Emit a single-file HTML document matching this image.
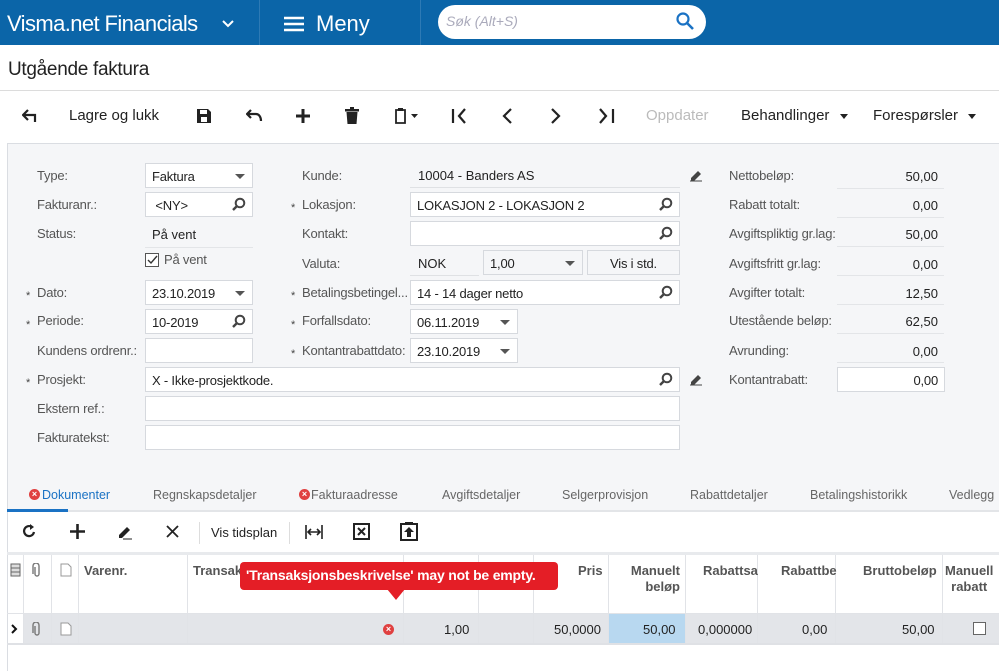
<!DOCTYPE html>
<html><head><meta charset="utf-8"><style>
*{margin:0;padding:0;box-sizing:border-box}
body{width:999px;height:671px;overflow:hidden;background:#fff;font-family:"Liberation Sans",Arial,sans-serif;position:relative;color:#222}
.a{position:absolute;white-space:nowrap}
.lbl{font-size:13px;color:#555;letter-spacing:-0.2px}
.inp{position:absolute;background:#fff;border:1px solid #d6d9de;height:25px;font-size:13px;padding:5px 6px;color:#222;letter-spacing:-0.2px}
.st{position:absolute;font-size:11px;color:#444}
.dd{position:absolute;right:7px;top:10px;border-left:5px solid transparent;border-right:5px solid transparent;border-top:5px solid #555}
.mg{position:absolute;right:6px;top:4px;width:14px;height:14px}
.val{position:absolute;font-size:13px;text-align:right;width:100px;color:#222}
.tb{font-size:15px;color:#222}
.gh{font-size:13px;font-weight:bold;color:#555}
.vl{position:absolute;top:555px;width:1px;height:88px;background:#e1e3e7}
</style></head><body>
<!-- header -->
<div class="a" style="left:0;top:0;width:999px;height:45px;background:#0b65a8"></div>
<div class="a" style="left:259px;top:0;width:1px;height:45px;background:#2d7ab5"></div>
<div class="a" style="left:420px;top:0;width:1px;height:45px;background:#2d7ab5"></div>
<div class="a" style="left:7px;top:11px;color:#fff;font-size:22px;letter-spacing:-0.6px">Visma.net Financials</div>
<svg class="a" style="left:222px;top:20px" width="12" height="8"><path d="M1 1l5 5 5-5" stroke="#fff" stroke-width="2" fill="none"/></svg>
<svg class="a" style="left:284px;top:16px" width="20" height="16"><path d="M0 2h20M0 8h20M0 14h20" stroke="#fff" stroke-width="2.5"/></svg>
<div class="a" style="left:316px;top:11px;color:#fff;font-size:22px">Meny</div>
<div class="a" style="left:438px;top:5px;width:268px;height:34px;background:#fff;border-radius:17px"></div>
<div class="a" style="left:446px;top:13px;color:#aab;font-size:14px;font-style:italic">Søk (Alt+S)</div>
<svg class="a" style="left:676px;top:12px" width="18" height="18"><circle cx="7" cy="7" r="5.5" stroke="#1a72c4" stroke-width="2.2" fill="none"/><path d="M11 11l6 6" stroke="#1a72c4" stroke-width="2.6"/></svg>
<!-- title -->
<div class="a" style="left:8px;top:59px;font-size:19px;color:#222;letter-spacing:-0.3px">Utgående faktura</div>
<div class="a" style="left:0;top:90px;width:999px;height:1px;background:#dcdcdc"></div>
<!-- toolbar -->
<svg class="a" style="left:22px;top:109px" width="16" height="14"><path d="M6 1L1 6l5 5M1 6h12v7" stroke="#222" stroke-width="2.2" fill="none"/></svg>
<div class="a tb" style="left:69px;top:107px">Lagre og lukk</div>
<svg class="a" style="left:196px;top:108px" width="16" height="16"><path d="M1 1h11l3 3v11H1z" fill="#222"/><rect x="4" y="2" width="7" height="4" fill="#fff"/><rect x="5" y="9" width="6" height="5" fill="#fff"/></svg>
<svg class="a" style="left:246px;top:109px" width="17" height="14"><path d="M5 1L1 5l4 4M1 5h9c3 0 5 3 5 7" stroke="#222" stroke-width="2.2" fill="none"/></svg>
<svg class="a" style="left:295px;top:108px" width="16" height="16"><path d="M8 1v14M1 8h14" stroke="#222" stroke-width="3"/></svg>
<svg class="a" style="left:345px;top:107px" width="14" height="17"><rect x="0" y="2" width="14" height="2.5" fill="#222"/><rect x="5" y="0" width="4" height="2" fill="#222"/><path d="M1.5 5h11l-1 12h-9z" fill="#222"/></svg>
<svg class="a" style="left:393px;top:107px" width="32" height="18"><path d="M3 3h9v13H3z" stroke="#222" stroke-width="1.8" fill="none"/><rect x="5" y="1" width="5" height="3" fill="#222"/><path d="M18 7h7l-3.5 4z" fill="#222"/></svg>
<svg class="a" style="left:451px;top:108px" width="18" height="16"><path d="M2 1v14M14 1L8 8l6 7" stroke="#222" stroke-width="2.2" fill="none"/></svg>
<svg class="a" style="left:501px;top:108px" width="12" height="16"><path d="M10 1L3 8l7 7" stroke="#222" stroke-width="2.2" fill="none"/></svg>
<svg class="a" style="left:550px;top:108px" width="12" height="16"><path d="M2 1l7 7-7 7" stroke="#222" stroke-width="2.2" fill="none"/></svg>
<svg class="a" style="left:598px;top:108px" width="18" height="16"><path d="M2 1l6 7-6 7M15 1v14" stroke="#222" stroke-width="2.2" fill="none"/></svg>
<div class="a tb" style="left:646px;top:107px;color:#bbb">Oppdater</div>
<div class="a tb" style="left:741px;top:107px">Behandlinger</div>
<div class="a" style="left:840px;top:114px;border-left:4px solid transparent;border-right:4px solid transparent;border-top:5px solid #222"></div>
<div class="a tb" style="left:873px;top:107px">Forespørsler</div>
<div class="a" style="left:968px;top:114px;border-left:4px solid transparent;border-right:4px solid transparent;border-top:5px solid #222"></div>
<!-- form area -->
<div class="a" style="left:7px;top:143px;width:992px;height:369px;background:#f5f6f8;border-left:1px solid #dadde2;border-top:1px solid #dadde2"></div>
<!-- left labels -->
<div class="a lbl" style="left:37px;top:168px">Type:</div>
<div class="a lbl" style="left:37px;top:197px">Fakturanr.:</div>
<div class="a lbl" style="left:37px;top:226px">Status:</div>
<div class="st" style="left:26px;top:290px">*</div><div class="a lbl" style="left:37px;top:285px">Dato:</div>
<div class="st" style="left:26px;top:319px">*</div><div class="a lbl" style="left:37px;top:313px">Periode:</div>
<div class="a lbl" style="left:37px;top:343px">Kundens ordrenr.:</div>
<div class="st" style="left:26px;top:377px">*</div><div class="a lbl" style="left:37px;top:372px">Prosjekt:</div>
<div class="a lbl" style="left:37px;top:401px">Ekstern ref.:</div>
<div class="a lbl" style="left:37px;top:430px">Fakturatekst:</div>
<div class="inp" style="left:145px;top:163px;width:108px">Faktura<span class="dd"></span></div>
<div class="inp" style="left:145px;top:192px;width:108px">&nbsp;&lt;NY&gt;<svg class="mg" viewBox="0 0 14 14"><circle cx="8" cy="6" r="4.3" stroke="#444" stroke-width="2" fill="none"/><path d="M5 9l-4 4" stroke="#444" stroke-width="2.4"/></svg></div>
<div class="a" style="left:152px;top:227px;font-size:13px">På vent</div>
<div class="a" style="left:145px;top:247px;width:108px;height:1px;background:#e3e5e8"></div>
<div class="a" style="left:145px;top:253px;width:14px;height:14px;border:1px solid #555;background:#fff"></div>
<svg class="a" style="left:147px;top:255px" width="11" height="10"><path d="M1 5l3 3 6-7" stroke="#333" stroke-width="1.4" fill="none"/></svg>
<div class="a lbl" style="left:164px;top:252px">På vent</div>
<div class="inp" style="left:145px;top:280px;width:108px">23.10.2019<span class="dd"></span></div>
<div class="inp" style="left:145px;top:309px;width:108px">10-2019<svg class="mg" viewBox="0 0 14 14"><circle cx="8" cy="6" r="4.3" stroke="#444" stroke-width="2" fill="none"/><path d="M5 9l-4 4" stroke="#444" stroke-width="2.4"/></svg></div>
<div class="inp" style="left:145px;top:338px;width:108px"></div>
<div class="inp" style="left:145px;top:367px;width:535px">X - Ikke-prosjektkode.<svg class="mg" viewBox="0 0 14 14"><circle cx="8" cy="6" r="4.3" stroke="#444" stroke-width="2" fill="none"/><path d="M5 9l-4 4" stroke="#444" stroke-width="2.4"/></svg></div>
<div class="inp" style="left:145px;top:396px;width:535px"></div>
<div class="inp" style="left:145px;top:425px;width:535px"></div>
<!-- middle -->
<div class="a lbl" style="left:302px;top:168px">Kunde:</div>
<div class="st" style="left:291px;top:202px">*</div><div class="a lbl" style="left:302px;top:197px">Lokasjon:</div>
<div class="a lbl" style="left:302px;top:226px">Kontakt:</div>
<div class="a lbl" style="left:302px;top:256px">Valuta:</div>
<div class="st" style="left:291px;top:290px">*</div><div class="a lbl" style="left:302px;top:285px">Betalingsbetingel...</div>
<div class="st" style="left:291px;top:319px">*</div><div class="a lbl" style="left:302px;top:313px">Forfallsdato:</div>
<div class="st" style="left:291px;top:348px">*</div><div class="a lbl" style="left:302px;top:343px">Kontantrabattdato:</div>
<div class="a" style="left:418px;top:168px;font-size:13px">10004 - Banders AS</div>
<div class="a" style="left:410px;top:187px;width:270px;height:1px;background:#dfe1e4"></div>
<div class="inp" style="left:410px;top:192px;width:270px">LOKASJON 2 - LOKASJON 2<svg class="mg" viewBox="0 0 14 14"><circle cx="8" cy="6" r="4.3" stroke="#444" stroke-width="2" fill="none"/><path d="M5 9l-4 4" stroke="#444" stroke-width="2.4"/></svg></div>
<div class="inp" style="left:410px;top:221px;width:270px"><svg class="mg" viewBox="0 0 14 14"><circle cx="8" cy="6" r="4.3" stroke="#444" stroke-width="2" fill="none"/><path d="M5 9l-4 4" stroke="#444" stroke-width="2.4"/></svg></div>
<div class="a" style="left:418px;top:256px;font-size:13px">NOK</div>
<div class="a" style="left:410px;top:275px;width:69px;height:1px;background:#dfe1e4"></div>
<div class="inp" style="left:483px;top:250px;width:100px;background:#f5f6f8">1,00<span class="dd"></span></div>
<div class="inp" style="left:587px;top:250px;width:93px;background:#f5f6f8;text-align:center">Vis i std.</div>
<div class="inp" style="left:410px;top:280px;width:270px">14 - 14 dager netto<svg class="mg" viewBox="0 0 14 14"><circle cx="8" cy="6" r="4.3" stroke="#444" stroke-width="2" fill="none"/><path d="M5 9l-4 4" stroke="#444" stroke-width="2.4"/></svg></div>
<div class="inp" style="left:410px;top:309px;width:108px">06.11.2019<span class="dd"></span></div>
<div class="inp" style="left:410px;top:338px;width:108px">23.10.2019<span class="dd"></span></div>
<svg class="a" style="left:689px;top:168px" width="14" height="14"><path d="M2 10l7-7 3 3-7 7H2z" fill="#444"/><path d="M1 13h12" stroke="#444"/></svg>
<svg class="a" style="left:689px;top:372px" width="14" height="14"><path d="M2 10l7-7 3 3-7 7H2z" fill="#444"/><path d="M1 13h12" stroke="#444"/></svg>
<!-- right -->
<div class="a lbl" style="left:729px;top:168px">Nettobeløp:</div>
<div class="a lbl" style="left:729px;top:197px">Rabatt totalt:</div>
<div class="a lbl" style="left:729px;top:226px">Avgiftspliktig gr.lag:</div>
<div class="a lbl" style="left:729px;top:256px">Avgiftsfritt gr.lag:</div>
<div class="a lbl" style="left:729px;top:285px">Avgifter totalt:</div>
<div class="a lbl" style="left:729px;top:313px">Utestående beløp:</div>
<div class="a lbl" style="left:729px;top:343px">Avrunding:</div>
<div class="a lbl" style="left:729px;top:372px">Kontantrabatt:</div>
<div class="val" style="left:838px;top:169px">50,00</div>
<div class="val" style="left:838px;top:198px">0,00</div>
<div class="val" style="left:838px;top:227px">50,00</div>
<div class="val" style="left:838px;top:257px">0,00</div>
<div class="val" style="left:838px;top:286px">12,50</div>
<div class="val" style="left:838px;top:314px">62,50</div>
<div class="val" style="left:838px;top:344px">0,00</div>
<div class="a" style="left:837px;top:188px;width:107px;height:1px;background:#e3e5e8"></div>
<div class="a" style="left:837px;top:217px;width:107px;height:1px;background:#e3e5e8"></div>
<div class="a" style="left:837px;top:246px;width:107px;height:1px;background:#e3e5e8"></div>
<div class="a" style="left:837px;top:275px;width:107px;height:1px;background:#e3e5e8"></div>
<div class="a" style="left:837px;top:304px;width:107px;height:1px;background:#e3e5e8"></div>
<div class="a" style="left:837px;top:333px;width:107px;height:1px;background:#e3e5e8"></div>
<div class="a" style="left:837px;top:362px;width:107px;height:1px;background:#e3e5e8"></div>
<div class="inp" style="left:837px;top:367px;width:108px;text-align:right;padding-right:6px">0,00</div>
<!-- tabs -->
<div class="a" style="left:7px;top:510px;width:992px;height:2px;background:#e3e5e8"></div>
<div class="a" style="left:7px;top:509px;width:61px;height:3px;background:#1a72c4"></div>
<div class="a" style="left:29px;top:489px;width:11px;height:11px;border-radius:50%;background:#e04040;color:#fff;font-size:9px;line-height:11px;text-align:center;font-weight:bold">×</div>
<div class="a" style="left:42px;top:488px;font-size:12.5px;color:#1a72c4">Dokumenter</div>
<div class="a" style="left:153px;top:488px;font-size:12.5px;color:#666">Regnskapsdetaljer</div>
<div class="a" style="left:299px;top:489px;width:11px;height:11px;border-radius:50%;background:#e04040;color:#fff;font-size:9px;line-height:11px;text-align:center;font-weight:bold">×</div>
<div class="a" style="left:311px;top:488px;font-size:12.5px;color:#666">Fakturaadresse</div>
<div class="a" style="left:442px;top:488px;font-size:12.5px;color:#666">Avgiftsdetaljer</div>
<div class="a" style="left:562px;top:488px;font-size:12.5px;color:#666">Selgerprovisjon</div>
<div class="a" style="left:690px;top:488px;font-size:12.5px;color:#666">Rabattdetaljer</div>
<div class="a" style="left:810px;top:488px;font-size:12.5px;color:#666">Betalingshistorikk</div>
<div class="a" style="left:949px;top:488px;font-size:12.5px;color:#666">Vedlegg</div>
<!-- grid toolbar -->
<div class="a" style="left:7px;top:512px;width:1px;height:159px;background:#dadde2"></div>
<svg class="a" style="left:22px;top:524px" width="14" height="15"><path d="M12 8a5 5 0 1 1-2-5" stroke="#222" stroke-width="2.2" fill="none"/><path d="M8 0l4 3-4 3z" fill="#222"/></svg>
<svg class="a" style="left:70px;top:524px" width="15" height="15"><path d="M7.5 0v15M0 7.5h15" stroke="#222" stroke-width="2.6"/></svg>
<svg class="a" style="left:117px;top:524px" width="16" height="16"><path d="M2 11l8-8 3 3-8 8H2z" fill="#222"/><path d="M6 15h9" stroke="#222"/></svg>
<svg class="a" style="left:166px;top:525px" width="13" height="13"><path d="M1 1l11 11M12 1L1 12" stroke="#222" stroke-width="1.8"/></svg>
<div class="a" style="left:199px;top:522px;width:1px;height:22px;background:#ddd"></div>
<div class="a" style="left:211px;top:525px;font-size:13px">Vis tidsplan</div>
<div class="a" style="left:289px;top:522px;width:1px;height:22px;background:#ddd"></div>
<svg class="a" style="left:305px;top:525px" width="18" height="14"><path d="M1 0v14M17 0v14M3 7h12M6 4L3 7l3 3M12 4l3 3-3 3" stroke="#222" stroke-width="1.6" fill="none"/></svg>
<svg class="a" style="left:353px;top:523px" width="17" height="17"><rect x="1" y="1" width="15" height="15" stroke="#222" stroke-width="2" fill="#fff"/><path d="M5 5l7 7M12 5l-7 7" stroke="#222" stroke-width="2"/></svg>
<svg class="a" style="left:400px;top:521px" width="18" height="20"><rect x="1" y="3" width="16" height="16" stroke="#222" stroke-width="2" fill="#fff"/><rect x="5" y="1" width="8" height="3" fill="#222"/><path d="M9 6l5 5h-3v5H7v-5H4z" fill="#222"/></svg>
<!-- grid -->
<div class="a" style="left:7px;top:552px;width:992px;height:3px;background:#e8eaed"></div>
<div class="a" style="left:7px;top:613px;width:992px;height:1px;background:#e1e3e7"></div>
<div class="a" style="left:23px;top:614px;width:976px;height:29px;background:#e3e5e9"></div>
<div class="a" style="left:608px;top:614px;width:77px;height:29px;background:#b8d8f0"></div>
<div class="a" style="left:7px;top:643px;width:992px;height:2px;background:#dfe1e5"></div>
<div class="vl" style="left:23px"></div><div class="vl" style="left:51px"></div><div class="vl" style="left:78px"></div>
<div class="vl" style="left:187px"></div><div class="vl" style="left:403px"></div><div class="vl" style="left:478px"></div>
<div class="vl" style="left:533px"></div><div class="vl" style="left:608px"></div><div class="vl" style="left:685px"></div>
<div class="vl" style="left:757px"></div><div class="vl" style="left:835px"></div><div class="vl" style="left:942px"></div>
<svg class="a" style="left:10px;top:563px" width="11" height="14"><rect x="1" y="1" width="9" height="12" stroke="#666" fill="#ddd"/><path d="M1 5h9M1 9h9" stroke="#666"/></svg>
<svg class="a" style="left:32px;top:563px" width="10" height="14"><path d="M3 4v7a2 2 0 0 0 4 0V3a3 3 0 0 0-6 0v8" stroke="#777" stroke-width="1.4" fill="none"/></svg>
<svg class="a" style="left:60px;top:563px" width="12" height="14"><path d="M1 1h7l3 3v9H1z" stroke="#999" fill="#fff"/></svg>
<div class="a gh" style="left:84px;top:563px">Varenr.</div>
<div class="a gh" style="left:193px;top:563px">Transak</div>
<div class="a gh" style="left:578px;top:563px">Pris</div>
<div class="a gh" style="left:610px;top:563px;width:70px;text-align:right;line-height:16px">Manuelt<br>beløp</div>
<div class="a gh" style="left:703px;top:563px">Rabattsa</div>
<div class="a gh" style="left:781px;top:563px">Rabattbe</div>
<div class="a gh" style="left:863px;top:563px">Bruttobeløp</div>
<div class="a gh" style="left:945px;top:563px;line-height:16px;text-align:center">Manuell<br>rabatt</div>
<!-- tooltip -->
<div class="a" style="left:240px;top:562px;width:318px;height:28px;background:#e41e26;border-radius:4px;color:#fff;font-weight:bold;font-size:14px;padding:5px 6px;letter-spacing:-0.2px">'Transaksjonsbeskrivelse' may not be empty.</div>
<div class="a" style="left:387px;top:589px;border-left:9px solid transparent;border-right:9px solid transparent;border-top:11px solid #e41e26"></div>
<!-- row -->
<svg class="a" style="left:11px;top:624px" width="7" height="10"><path d="M1 1l4 4-4 4" stroke="#111" stroke-width="2" fill="none"/></svg>
<svg class="a" style="left:32px;top:622px" width="10" height="14"><path d="M3 4v7a2 2 0 0 0 4 0V3a3 3 0 0 0-6 0v8" stroke="#777" stroke-width="1.4" fill="none"/></svg>
<svg class="a" style="left:60px;top:622px" width="12" height="14"><path d="M1 1h7l3 3v9H1z" stroke="#999" fill="#fff"/></svg>
<div class="a" style="left:383px;top:624px;width:11px;height:11px;border-radius:50%;background:#e04040;color:#fff;font-size:9px;line-height:11px;text-align:center;font-weight:bold">×</div>
<div class="a" style="left:444px;top:622px;font-size:13px">1,00</div>
<div class="a" style="left:554px;top:622px;font-size:13px">50,0000</div>
<div class="a" style="left:643px;top:622px;font-size:13px">50,00</div>
<div class="a" style="left:698px;top:622px;font-size:13px">0,000000</div>
<div class="a" style="left:802px;top:622px;font-size:13px">0,00</div>
<div class="a" style="left:902px;top:622px;font-size:13px">50,00</div>
<div class="a" style="left:973px;top:622px;width:13px;height:13px;border:1px solid #666;background:#fff"></div>
</body></html>
